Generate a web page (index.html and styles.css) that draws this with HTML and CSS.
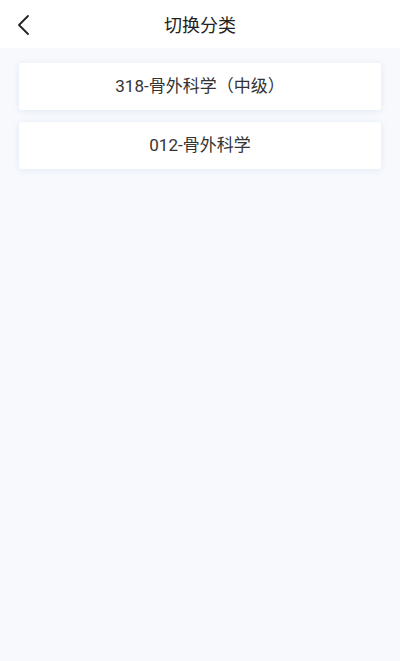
FILE: index.html
```html
<!DOCTYPE html>
<html lang="zh">
<head>
<meta charset="utf-8">
<link rel="stylesheet" href="styles.css">
</head>
<body>
<div class="page">
  <header class="nav">
    <svg class="back" width="14" height="22" viewBox="0 0 14 22"><path d="M12 2 L3 11 L12 20" fill="none" stroke="#222" stroke-width="1.8" stroke-linecap="round" stroke-linejoin="round"/></svg>
    <h1 class="title">切换分类</h1>
  </header>
  <main class="list">
    <div class="card">318-骨外科学（中级）</div>
    <div class="card">012-骨外科学</div>
  </main>
</div>
</body>
</html>
```
FILE: styles.css
```css
html, body { margin: 0; padding: 0; }
body {
  font-family: Roboto, "Noto Sans CJK SC", sans-serif;
  color: #333;
  background: #f7f9fd;
}
.page { width: 400px; height: 661px; display: flex; flex-direction: column; }
.nav {
  height: 48px;
  background: #fff;
  display: flex;
  align-items: center;
  justify-content: center;
  position: relative;
}
.back { position: absolute; left: 16px; top: 14px; }
.title { margin: 0; font-size: 18px; font-weight: 400; color: #222; }
.list {
  flex: 1;
  padding: 15px 19px;
  display: flex;
  flex-direction: column;
  gap: 12px;
}
.card {
  height: 47px;
  background: #fff;
  border-radius: 3px;
  box-shadow: 0 1px 6px rgba(200, 215, 235, 0.45);
  display: flex;
  align-items: center;
  justify-content: center;
  font-size: 17px;
  line-height: 1;
  color: #333;
}
```
